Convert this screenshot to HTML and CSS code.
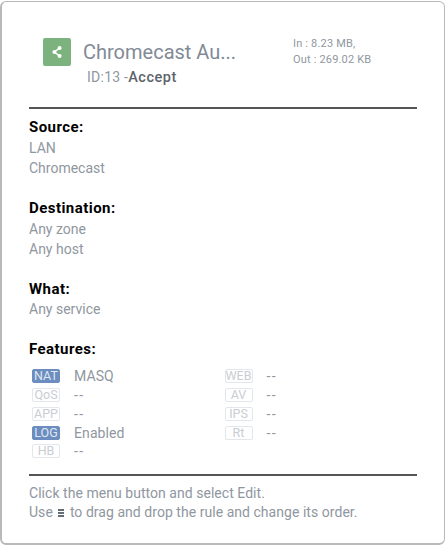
FILE: index.html
```html
<!DOCTYPE html>
<html lang="en">
<head>
<meta charset="utf-8">
<title>Rule details</title>
<link rel="stylesheet" href="styles.css">
</head>
<body>
<main class="card">
  <header class="head">
    <div class="head-main">
      <div class="title-row">
        <span class="rule-icon">
          <svg width="14" height="14" viewBox="0 0 14 14" aria-hidden="true">
            <path d="M9.5 3 L4.5 7 L9.5 11" fill="none" stroke="#fff" stroke-width="1.6"/>
            <circle cx="9.6" cy="3" r="2" fill="#fff"/>
            <circle cx="4.4" cy="7" r="2" fill="#fff"/>
            <circle cx="9.6" cy="11" r="2" fill="#fff"/>
          </svg>
        </span>
        <h1 class="title">Chromecast Au...</h1>
      </div>
      <p class="rule-id">ID:13 -<b>Accept</b></p>
    </div>
    <div class="traffic">
      <div>In : 8.23 MB,</div>
      <div>Out : 269.02 KB</div>
    </div>
  </header>

  <section class="block block-first">
    <h2>Source:</h2>
    <p>LAN</p>
    <p>Chromecast</p>
  </section>
  <section class="block">
    <h2>Destination:</h2>
    <p>Any zone</p>
    <p>Any host</p>
  </section>
  <section class="block">
    <h2>What:</h2>
    <p>Any service</p>
  </section>
  <section class="block features">
    <h2>Features:</h2>
    <div class="feature-grid">
      <div class="col">
        <div class="row"><span class="tag on">NAT</span><span class="val">MASQ</span></div>
        <div class="row"><span class="tag">QoS</span><span class="val dash">--</span></div>
        <div class="row"><span class="tag">APP</span><span class="val dash">--</span></div>
        <div class="row"><span class="tag on">LOG</span><span class="val">Enabled</span></div>
        <div class="row"><span class="tag">HB</span><span class="val dash">--</span></div>
      </div>
      <div class="col">
        <div class="row"><span class="tag">WEB</span><span class="val dash">--</span></div>
        <div class="row"><span class="tag">AV</span><span class="val dash">--</span></div>
        <div class="row"><span class="tag">IPS</span><span class="val dash">--</span></div>
        <div class="row"><span class="tag">Rt</span><span class="val dash">--</span></div>
      </div>
    </div>
  </section>

  <footer class="foot">
    <p>Click the menu button and select Edit.</p>
    <p>Use <span class="grip"><i></i><i></i><i></i></span> to drag and drop the rule and change its order.</p>
  </footer>
</main>
</body>
</html>
```
FILE: styles.css
```css
* { box-sizing: border-box; }
html, body { margin: 0; height: 100%; }
body {
  background: #fff;
  font-family: Roboto, "Liberation Sans", sans-serif;
  color: #8f97a0;
  overflow: hidden;
}
.card {
  width: 445px;
  height: 544px;
  margin: 1px 0 0 0;
  padding: 0 27px;
  background: #fff;
  border: 1px solid #b9b9b9;
  border-width: 1px 1px 2px 2px;
  border-radius: 6px;
}
.head {
  display: flex;
  height: 107px;
  border-bottom: 2px solid #555;
  padding: 35px 0 0 14px;
}
.head-main { width: 250px; }
.title-row { display: flex; align-items: center; gap: 12px; }
.rule-icon {
  width: 28px;
  height: 28px;
  background: #7cb27e;
  border-radius: 2px;
  display: flex;
  align-items: center;
  justify-content: center;
}
.title {
  margin: 0;
  font-size: 20px;
  font-weight: 400;
  line-height: 30px;
  color: #818a96;
}
.rule-id {
  margin: 1px 0 0 44px;
  font-size: 14px;
  line-height: 18px;
  letter-spacing: 0.25px;
}
.rule-id b { font-weight: 500; font-size: 14.5px; letter-spacing: 0.5px; color: #5d646c; }
.traffic {
  font-size: 11px;
  line-height: 16px;
  letter-spacing: 0.18px;
  margin-top: -1px;
}
.block { margin-top: 21px; }
.block-first { margin-top: 9px; }
.block h2 {
  margin: 0 0 1.5px;
  font-size: 15px;
  line-height: 18px;
  font-weight: 700;
  letter-spacing: 0.45px;
  color: #000;
}
.block-first h2 { margin-bottom: 2px; }
.block p {
  margin: 0;
  font-size: 14px;
  line-height: 20px;
}
.features h2 { margin-bottom: 9px; }
.feature-grid { display: flex; padding-left: 3px; }
.col { width: 193px; }
.row {
  display: flex;
  align-items: center;
  height: 18.75px;
  font-size: 14px;
}
.tag {
  width: 28px;
  height: 14px;
  border: 1px solid #e3e6ea;
  border-radius: 2px;
  font-size: 12.5px;
  line-height: 12px;
  text-align: center;
  color: #c9cdd2;
}
.tag.on { background: #6c8dbf; border-color: #6c8dbf; color: #dfe7f3; }
.val { margin-left: 14px; letter-spacing: 0.1px; }
.val.dash { letter-spacing: 1.5px; }
.foot {
  margin-top: 13.5px;
  border-top: 2px solid #555;
  padding-top: 8px;
  font-size: 14px;
  letter-spacing: 0.04px;
}
.foot p { margin: 0; line-height: 19px; }
.grip { display: inline-block; width: 6px; height: 8px; margin: 0 2px; }
.grip i { display: block; height: 2px; margin-bottom: 1px; background: #666c74; }
.grip i:last-child { margin-bottom: 0; }
```
